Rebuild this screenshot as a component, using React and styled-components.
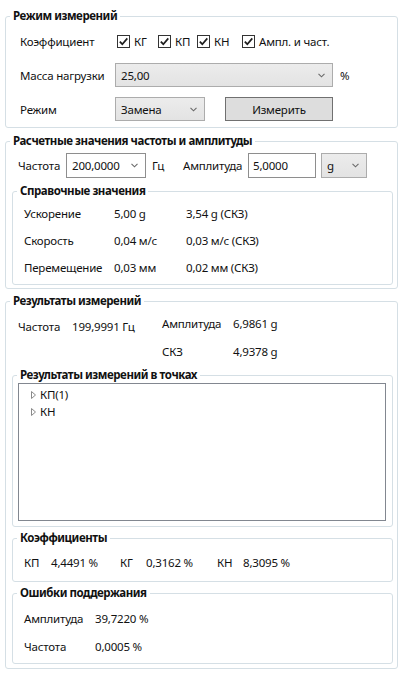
import styled, { createGlobalStyle } from "styled-components"

const GlobalStyle = createGlobalStyle`
  html, body {
    margin: 0;
    background: #ffffff;
  }
  body {
    font-family: "Noto Sans", "Open Sans", sans-serif;
    font-size: 11.5px;
    letter-spacing: -0.2px;
    color: #111111;
  }
`

const Chevron = () => (
  <svg width="7" height="5" viewBox="0 0 7 5">
    <path d="M0.5 0.8 L3.5 3.8 L6.5 0.8" fill="none" stroke="#6a6a6a" strokeWidth="1.1" />
  </svg>
)

const Check = ({ children }) => (
  <CheckItem>
    <Box>
      <svg width="11" height="11" viewBox="0 0 11 11">
        <path d="M1.8 5.6 L4.3 8.2 L9.3 2.4" fill="none" stroke="#1e1e1e" strokeWidth="1.7" />
      </svg>
    </Box>
    {children}
  </CheckItem>
)

const TreeNode = ({ children }) => (
  <TreeItem>
    <svg width="5" height="8" viewBox="0 0 5 8">
      <path d="M0.5 0.5 L4.5 4 L0.5 7.5 Z" fill="none" stroke="#8a8a8a" strokeWidth="1" />
    </svg>
    {children}
  </TreeItem>
)

const App = () => {
  return (
    <Page>
      <GlobalStyle />

      <Group>
        <Legend>Режим измерений</Legend>
        <ModeGrid>
          <span>Коэффициент</span>
          <Checks>
            <Check>КГ</Check>
            <Check>КП</Check>
            <Check>КН</Check>
            <Check>Ампл. и част.</Check>
          </Checks>
          <span>Масса нагрузки</span>
          <Line>
            <Combo $w={218}>25,00<Chevron /></Combo>
            <Unit $ml={7}>%</Unit>
          </Line>
          <span>Режим</span>
          <Line>
            <Combo $w={90}>Замена<Chevron /></Combo>
            <Button>Измерить</Button>
          </Line>
        </ModeGrid>
      </Group>

      <Group $m="5px 0 0 0">
        <Legend>Расчетные значения частоты и амплитуды</Legend>
        <CalcRow>
          <Cell $w={48}>Частота</Cell>
          <Combo $w={80} $white>200,0000<Chevron /></Combo>
          <Cell $w={31} $ml={6}>Гц</Cell>
          <Cell $w={65}>Амплитуда</Cell>
          <TextBox $w={68}>5,0000</TextBox>
          <Combo $w={46} $ml={5}>g<Chevron /></Combo>
        </CalcRow>
        <Group $m="5px 4px 3px 6px">
          <Legend>Справочные значения</Legend>
          <RefGrid>
            <span>Ускорение</span><span>5,00 g</span><span>3,54 g (СКЗ)</span>
            <span>Скорость</span><span>0,04 м/с</span><span>0,03 м/с (СКЗ)</span>
            <span>Перемещение</span><span>0,03 мм</span><span>0,02 мм (СКЗ)</span>
          </RefGrid>
        </Group>
      </Group>

      <Group $m="4px 0 0 0">
        <Legend>Результаты измерений</Legend>
        <ResultGrid>
          <Shifted>Частота</Shifted>
          <Shifted>199,9991 Гц</Shifted>
          <span>Амплитуда</span>
          <span>6,9861 g</span>
          <span />
          <span />
          <span>СКЗ</span>
          <span>4,9378 g</span>
        </ResultGrid>

        <Group $m="2px 4px 0 6px">
          <Legend>Результаты измерений в точках</Legend>
          <ListBox>
            <TreeNode>КП(1)</TreeNode>
            <TreeNode>КН</TreeNode>
          </ListBox>
        </Group>

        <Group $m="3px 4px 0 6px">
          <Legend>Коэффициенты</Legend>
          <CoefRow>
            <span>КП</span><span>4,4491 %</span>
            <span>КГ</span><span>0,3162 %</span>
            <span>КН</span><span>8,3095 %</span>
          </CoefRow>
        </Group>

        <Group $m="3px 4px 4px 6px">
          <Legend>Ошибки поддержания</Legend>
          <ErrGrid>
            <span>Амплитуда</span><span>39,7220 %</span>
            <span>Частота</span><span>0,0005 %</span>
          </ErrGrid>
        </Group>
      </Group>
    </Page>
  )
}

const Page = styled.div`
  width: 393px;
  padding: 8px 0 4px 5px;
  display: flex;
  flex-direction: column;
`

const Group = styled.fieldset`
  margin: ${p => p.$m || "0"};
  padding: 0;
  min-width: 0;
  border: 1px solid #d5dfe5;
  border-radius: 3px;
`

const Legend = styled.legend`
  margin-left: 4px;
  padding: 0 3px;
  font-weight: 700;
  font-size: 11.5px;
  letter-spacing: -0.45px;
  line-height: 16px;
`

const ModeGrid = styled.div`
  display: grid;
  grid-template-columns: 95px 1fr;
  grid-auto-rows: 24px;
  row-gap: 10px;
  align-items: center;
  padding: 5px 0 6px 14px;
`

const Checks = styled.div`
  display: grid;
  grid-template-columns: 41px 39px 45px auto;
  padding-left: 2px;
`

const CheckItem = styled.label`
  display: flex;
  align-items: center;
  gap: 4px;
  white-space: nowrap;
`

const Box = styled.span`
  width: 13px;
  height: 13px;
  box-sizing: border-box;
  border: 1px solid #333333;
  background: #ffffff;
  display: inline-flex;
  align-items: center;
  justify-content: center;
`

const Line = styled.div`
  display: flex;
  align-items: center;
`

const Combo = styled.div`
  width: ${p => p.$w}px;
  height: 24px;
  box-sizing: border-box;
  margin-left: ${p => p.$ml || 0}px;
  padding: 0 7px 0 5px;
  display: flex;
  align-items: center;
  justify-content: space-between;
  border: 1px solid ${p => (p.$white ? "#8e8e8e" : "#acacac")};
  background: ${p => (p.$white ? "#ffffff" : "linear-gradient(#ececec, #e3e3e3)")};
`

const TextBox = styled.div`
  width: ${p => p.$w}px;
  height: 24px;
  box-sizing: border-box;
  padding: 0 4px;
  display: flex;
  align-items: center;
  border: 1px solid #8e8e8e;
  background: #ffffff;
`

const Button = styled.div`
  width: 108px;
  height: 24px;
  box-sizing: border-box;
  margin-left: 20px;
  display: flex;
  align-items: center;
  justify-content: center;
  border: 1px solid #707070;
  background: #dddddd;
`

const Unit = styled.span`
  margin-left: ${p => p.$ml || 0}px;
`

const CalcRow = styled.div`
  display: flex;
  align-items: center;
  height: 25px;
  padding: 4px 0 0 12px;
  & > div {
    height: 25px;
  }
`

const Cell = styled.span`
  width: ${p => p.$w}px;
  margin-left: ${p => p.$ml || 0}px;
  flex-shrink: 0;
  white-space: nowrap;
`

const RefGrid = styled.div`
  display: grid;
  grid-template-columns: 90px 72px 1fr;
  grid-auto-rows: 27px;
  align-items: center;
  padding: 1px 0 3px 11px;
`

const ResultGrid = styled.div`
  display: grid;
  grid-template-columns: 54px 90px 71px 1fr;
  grid-auto-rows: 28px;
  align-items: center;
  padding-left: 12px;
`

const Shifted = styled.span`
  margin-top: 6px;
`

const ListBox = styled.div`
  height: 138px;
  box-sizing: border-box;
  margin: 0 6px 5px 5px;
  padding: 2px 0;
  border: 1px solid #828790;
  background: #ffffff;
`

const TreeItem = styled.div`
  height: 17px;
  display: flex;
  align-items: center;
  gap: 4px;
  padding-left: 12px;
`

const CoefRow = styled.div`
  display: grid;
  grid-template-columns: 27px 69px 26px 71px 26px 1fr;
  height: 24px;
  align-items: center;
  padding: 4px 0 7px 11px;
`

const ErrGrid = styled.div`
  display: grid;
  grid-template-columns: 71px 1fr;
  grid-auto-rows: 28px;
  align-items: center;
  padding: 3px 0 3px 11px;
`

export default App
